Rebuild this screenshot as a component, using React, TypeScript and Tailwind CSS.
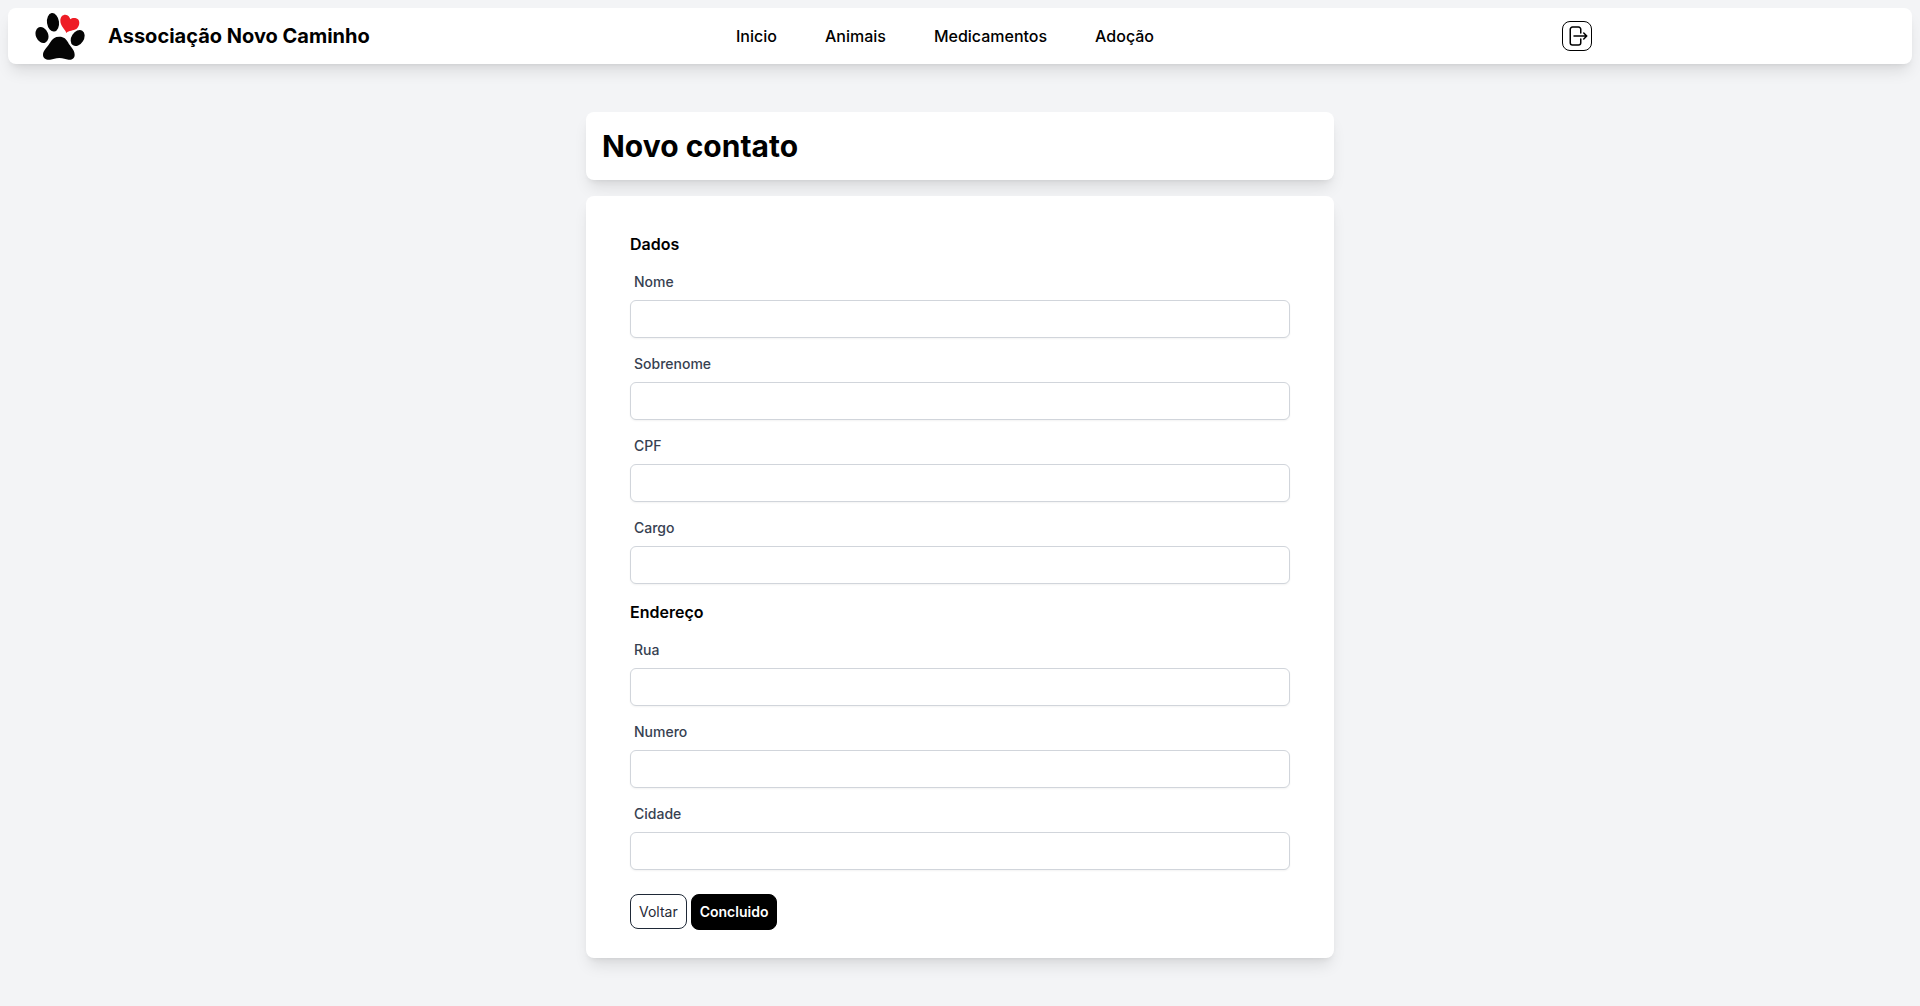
import { useId } from "react";

const links = ["Inicio", "Animais", "Medicamentos", "Adoção"];

function PawLogo() {
  return (
    <svg viewBox="30 21 150 144" className="h-12 w-[50px] shrink-0" aria-hidden="true">
      <g fill="#050505">
        <ellipse cx="84" cy="52" rx="18" ry="28" transform="rotate(-8 84 52)" />
        <ellipse cx="51" cy="90" rx="18.5" ry="25" transform="rotate(-22 51 90)" />
        <ellipse cx="158" cy="99" rx="18.5" ry="26" transform="rotate(32 158 99)" />
        <path d="M103 95C117 95 124 102 129 112C134 123 149 134 149 149C149 160 141 165 131 164C121 163 115 159 103 159C91 159 85 163 75 164C63 165 54 160 54 149C54 136 69 125 76 112C82 101 90 95 103 95Z" />
      </g>
      <path
        fill="#ee1c25"
        d="M124 84C122 74 106 64 106 47C106 35 113 29 121 29C130 30 134 36 136 43C141 38 152 37 159 43C166 51 163 65 154 72C145 78 132 75 124 84Z"
      />
    </svg>
  );
}

function Field({ label }: { label: string }) {
  const id = useId();
  return (
    <div className="flex flex-col gap-2">
      <label htmlFor={id} className="px-1 text-sm font-medium text-[#374151]">
        {label}
      </label>
      <input
        id={id}
        type="text"
        className="h-[38px] w-full rounded-md border border-[#d1d5db] bg-white px-3 text-sm shadow-xs"
      />
    </div>
  );
}

function Section({ title, fields }: { title: string; fields: string[] }) {
  return (
    <section className="flex flex-col gap-4">
      <h2 className="text-base font-semibold">{title}</h2>
      {fields.map((field) => (
        <Field key={field} label={field} />
      ))}
    </section>
  );
}

export default function App() {
  return (
    <div className="min-h-screen bg-gray-100 p-2 font-['Inter',sans-serif] text-black">
      <header className="grid h-14 grid-cols-[728fr_826fr_350fr] items-center rounded-lg bg-white shadow-lg">
        <div className="flex items-center gap-[23px] pl-[27px]">
          <PawLogo />
          <span className="text-xl font-bold whitespace-nowrap">Associação Novo Caminho</span>
        </div>
        <nav className="flex gap-12 font-medium">
          {links.map((link) => (
            <a key={link} href="#">
              {link}
            </a>
          ))}
        </nav>
        <button
          type="button"
          aria-label="Sair"
          className="flex size-[30px] items-center justify-center rounded-lg border border-black"
        >
          <svg
            viewBox="0 0 24 24"
            className="size-6 shrink-0"
            fill="none"
            stroke="currentColor"
            strokeWidth="1.5"
            strokeLinecap="round"
            strokeLinejoin="round"
          >
            <path d="M15.75 9V5.25A2.25 2.25 0 0 0 13.5 3h-6a2.25 2.25 0 0 0-2.25 2.25v13.5A2.25 2.25 0 0 0 7.5 21h6a2.25 2.25 0 0 0 2.25-2.25V15m3 0 3-3m0 0-3-3m3 3H9" />
          </svg>
        </button>
      </header>

      <main className="mx-auto mt-12 flex max-w-[748px] flex-col gap-4">
        <div className="rounded-lg bg-white p-4 shadow-lg">
          <h1 className="text-3xl font-bold">Novo contato</h1>
        </div>
        <form className="flex flex-col gap-4 rounded-lg bg-white px-11 pt-9 pb-7 shadow-lg">
          <Section title="Dados" fields={["Nome", "Sobrenome", "CPF", "Cargo"]} />
          <Section title="Endereço" fields={["Rua", "Numero", "Cidade"]} />
          <div className="mt-2 flex items-start gap-1 text-sm">
            <button
              type="button"
              className="h-[35px] rounded-lg border border-[#1f2937] px-2 text-[#1f2937]"
            >
              Voltar
            </button>
            <button
              type="submit"
              className="h-9 rounded-lg border border-black bg-black px-2 font-semibold text-white"
            >
              Concluido
            </button>
          </div>
        </form>
      </main>
    </div>
  );
}
